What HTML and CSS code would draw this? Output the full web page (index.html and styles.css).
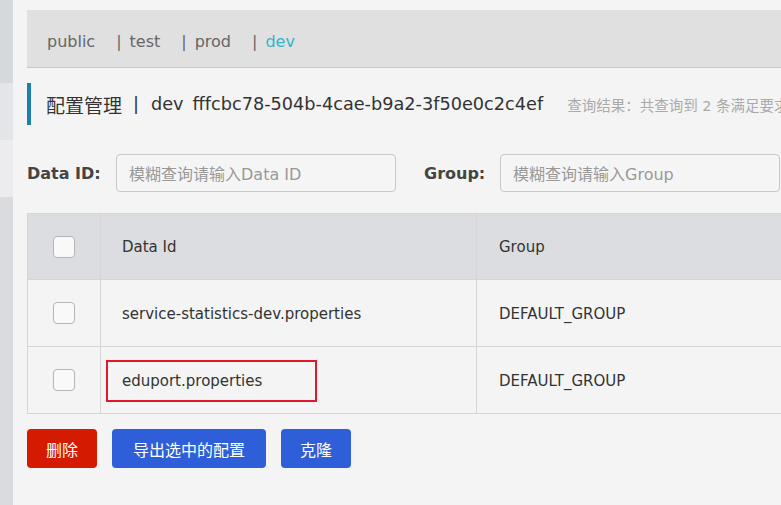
FILE: index.html
```html
<!DOCTYPE html>
<html lang="zh-CN">
<head>
<meta charset="utf-8">
<title>配置管理</title>
<link rel="stylesheet" href="styles.css">
</head>
<body>
<div class="page">
  <aside class="sidebar">
    <div class="seg seg-a"></div>
    <div class="seg seg-b"></div>
    <div class="seg seg-c"></div>
    <div class="seg seg-d"></div>
  </aside>
  <main class="main">
    <nav class="tabs">
      <span class="tab">public</span>
      <span class="tab"><span class="sep">|</span>test</span>
      <span class="tab"><span class="sep">|</span>prod</span>
      <span class="tab active"><span class="sep">|</span>dev</span>
    </nav>
    <div class="title">
      <span class="title-main">配置管理</span>
      <span class="title-sep">|</span>
      <span class="title-ns">dev</span>
      <span class="title-id">fffcbc78-504b-4cae-b9a2-3f50e0c2c4ef</span>
      <span class="title-result">查询结果：共查询到 2 条满足要求的配置。</span>
    </div>
    <div class="search">
      <label class="search-label">Data ID:</label>
      <div class="input">模糊查询请输入Data ID</div>
      <label class="search-label group-label">Group:</label>
      <div class="input">模糊查询请输入Group</div>
    </div>
    <div class="table">
      <div class="row head">
        <div class="cell c-check"><span class="checkbox"></span></div>
        <div class="cell c-id">Data Id</div>
        <div class="cell c-group">Group</div>
      </div>
      <div class="row">
        <div class="cell c-check"><span class="checkbox"></span></div>
        <div class="cell c-id">service-statistics-dev.properties</div>
        <div class="cell c-group">DEFAULT_GROUP</div>
      </div>
      <div class="row last">
        <div class="cell c-check"><span class="checkbox"></span></div>
        <div class="cell c-id"><span class="highlight">eduport.properties</span></div>
        <div class="cell c-group">DEFAULT_GROUP</div>
      </div>
    </div>
    <div class="actions">
      <button class="btn btn-danger">删除</button>
      <button class="btn btn-primary btn-export">导出选中的配置</button>
      <button class="btn btn-primary">克隆</button>
    </div>
  </main>
</div>
</body>
</html>
```
FILE: styles.css
```css
* { box-sizing: border-box; }
html, body { margin: 0; padding: 0; }
body {
  width: 781px;
  height: 505px;
  overflow: hidden;
  background: #f4f4f4;
  font-family: "DejaVu Sans", "Noto Sans CJK SC", sans-serif;
  color: #333;
}
.page { display: flex; height: 505px; }
.sidebar {
  width: 13px;
  flex: none;
  display: flex;
  flex-direction: column;
}
.seg-a { height: 83px; background: #d5d8dc; }
.seg-b { height: 57px; background: #e4e5e8; }
.seg-c { height: 57px; background: #ececee; }
.seg-d { flex: 1; background: #d9dbdf; }

.main {
  flex: none;
  width: 768px;
  padding: 10px 0 0 14px;
  overflow: hidden;
}
.tabs {
  width: 900px;
  height: 58px;
  background: #e0e0e0;
  border-bottom: 1px solid #c9c9c9;
  display: flex;
  align-items: center;
  padding: 6px 0 0 20px;
  font-size: 16px;
  color: #666;
}
.tab { margin-right: 21px; }
.sep { margin-right: 8px; }
.tab.active { color: #36b4c9; }
.tab.active .sep { color: #666; }

.title {
  margin-top: 15px;
  height: 42px;
  border-left: 4px solid #1c80ad;
  padding-left: 15px;
  display: flex;
  align-items: center;
  font-size: 17.7px;
  color: #333;
  white-space: nowrap;
  overflow: hidden;
}
.title-main { font-size: 19px; }
.title-sep { margin: 0 12px 0 11px; }
.title-ns { margin-right: 9px; }
.title-result {
  margin-left: 24px;
  font-size: 14.5px;
  color: #aaa;
}

.search {
  margin-top: 29px;
  display: flex;
  align-items: center;
  height: 38px;
}
.search-label {
  font-weight: bold;
  font-size: 16px;
  color: #444;
  width: 89px;
  flex: none;
}
.group-label { margin-left: 28px; width: 76px; }
.input {
  flex: none;
  width: 280px;
  height: 38px;
  border: 1px solid #c8c8c8;
  border-radius: 4px;
  background: #f5f5f5;
  display: flex;
  align-items: center;
  padding-left: 12px;
  font-size: 16px;
  color: #999;
}

.table {
  margin-top: 21px;
  width: 900px;
  border-left: 1px solid #d5d5d5;
}
.row {
  display: flex;
  height: 67px;
  border-bottom: 1px solid #d5d5d5;
}
.row.head { background: #dcdde0; height: 67px; border-top: 1px solid #d5d5d5; }
.cell {
  display: flex;
  align-items: center;
  font-size: 15px;
  color: #333;
  padding-top: 1px;
}
.c-check {
  width: 73px;
  justify-content: center;
  border-right: 1px solid #d5d5d5;
  padding: 0 1px 0 0;
}
.c-id {
  width: 376px;
  padding-left: 21px;
  border-right: 1px solid #d5d5d5;
}
.c-group { padding-left: 22px; }
.checkbox {
  width: 22px;
  height: 22px;
  border: 1.5px solid #b5b5b5;
  border-radius: 4px;
  background: #f9f9f9;
}
.highlight {
  display: inline-flex;
  align-items: center;
  height: 42px;
  margin-left: -16px;
  padding: 0 0 0 14px;
  width: 211px;
  border: 2px solid #e2172b;
}

.actions {
  margin-top: 15px;
  display: flex;
  gap: 15px;
}
.btn {
  height: 39px;
  border: none;
  border-radius: 4px;
  font-family: "Noto Sans CJK SC", sans-serif;
  font-size: 16px;
  color: #fff;
  padding: 0;
}
.btn-danger { background: #d41a00; width: 70px; }
.btn-primary { background: #2f5fd8; width: 70px; }
.btn-export { width: 154px; }
```
